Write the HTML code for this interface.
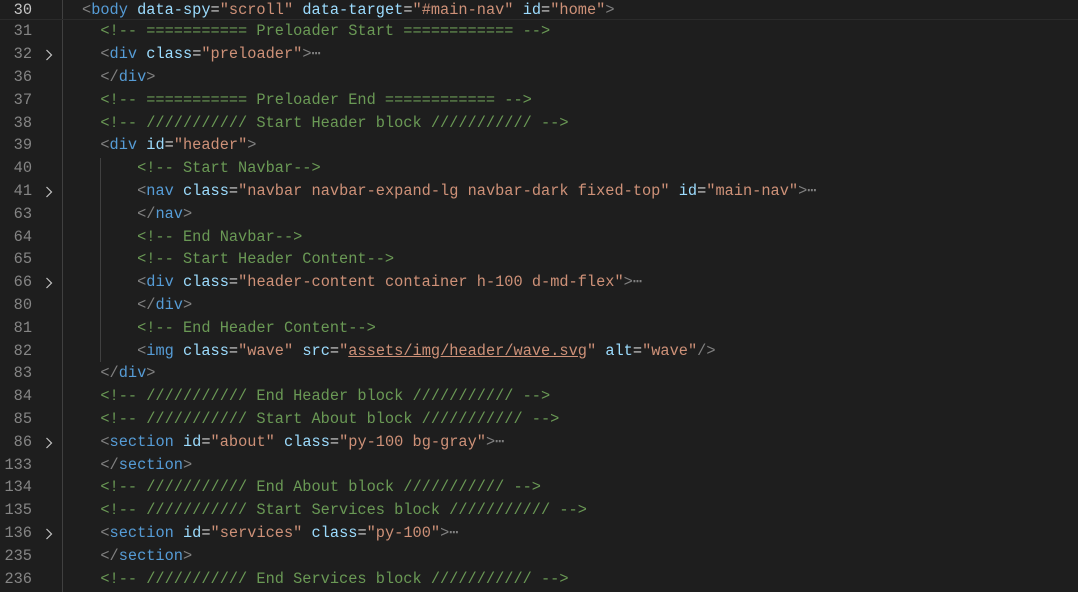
<!DOCTYPE html>
<html><head><style>
body{margin:0;width:1078px;height:592px;background:#1e1e1e;overflow:hidden;position:relative;font-family:"Liberation Mono",monospace;font-size:15.3px}
.l{position:absolute;left:0;width:1078px;height:22.8px;line-height:22.8px;white-space:pre}
.n{position:absolute;right:1046px;color:#858585;text-align:right}
.c{position:absolute;left:82px;color:#d4d4d4}
.f{position:absolute;left:45px;top:6px;width:8px;height:12px}
.cur{border-top:1px solid #2b2b2b;border-bottom:1px solid #2b2b2b;box-sizing:border-box}
.cur .n{color:#c6c6c6}
.t{color:#569cd6}.b{color:#808080}.a{color:#9cdcfe}.s{color:#ce9178}.m{color:#6a9955}.e{color:#808080}
.g{position:absolute;width:1px;background:#404040}
</style></head><body>
<div class="g" style="left:62px;top:0;height:592px"></div>
<div class="g" style="left:100px;top:158px;height:204px"></div>
<div class="l cur" style="top:-2.5px"><span class="n">30</span><span class="c"><span class="b">&lt;</span><span class="t">body</span> <span class="a">data-spy</span>=<span class="s">"scroll"</span> <span class="a">data-target</span>=<span class="s">"#main-nav"</span> <span class="a">id</span>=<span class="s">"home"</span><span class="b">&gt;</span></span></div>
<div class="l" style="top:20.3px"><span class="n">31</span><span class="c">  <span class="m">&lt;!-- =========== Preloader Start ============ --&gt;</span></span></div>
<div class="l" style="top:43.1px"><span class="n">32</span><svg class="f" viewBox="0 0 8 12"><polyline points="1.5,1 6.5,6 1.5,11" fill="none" stroke="#c5c5c5" stroke-width="1.2"/></svg><span class="c">  <span class="b">&lt;</span><span class="t">div</span> <span class="a">class</span>=<span class="s">"preloader"</span><span class="b">&gt;</span><span class="e">⋯</span></span></div>
<div class="l" style="top:65.9px"><span class="n">36</span><span class="c">  <span class="b">&lt;/</span><span class="t">div</span><span class="b">&gt;</span></span></div>
<div class="l" style="top:88.7px"><span class="n">37</span><span class="c">  <span class="m">&lt;!-- =========== Preloader End ============ --&gt;</span></span></div>
<div class="l" style="top:111.5px"><span class="n">38</span><span class="c">  <span class="m">&lt;!-- /////////// Start Header block /////////// --&gt;</span></span></div>
<div class="l" style="top:134.3px"><span class="n">39</span><span class="c">  <span class="b">&lt;</span><span class="t">div</span> <span class="a">id</span>=<span class="s">"header"</span><span class="b">&gt;</span></span></div>
<div class="l" style="top:157.1px"><span class="n">40</span><span class="c">      <span class="m">&lt;!-- Start Navbar--&gt;</span></span></div>
<div class="l" style="top:179.9px"><span class="n">41</span><svg class="f" viewBox="0 0 8 12"><polyline points="1.5,1 6.5,6 1.5,11" fill="none" stroke="#c5c5c5" stroke-width="1.2"/></svg><span class="c">      <span class="b">&lt;</span><span class="t">nav</span> <span class="a">class</span>=<span class="s">"navbar navbar-expand-lg navbar-dark fixed-top"</span> <span class="a">id</span>=<span class="s">"main-nav"</span><span class="b">&gt;</span><span class="e">⋯</span></span></div>
<div class="l" style="top:202.7px"><span class="n">63</span><span class="c">      <span class="b">&lt;/</span><span class="t">nav</span><span class="b">&gt;</span></span></div>
<div class="l" style="top:225.5px"><span class="n">64</span><span class="c">      <span class="m">&lt;!-- End Navbar--&gt;</span></span></div>
<div class="l" style="top:248.3px"><span class="n">65</span><span class="c">      <span class="m">&lt;!-- Start Header Content--&gt;</span></span></div>
<div class="l" style="top:271.1px"><span class="n">66</span><svg class="f" viewBox="0 0 8 12"><polyline points="1.5,1 6.5,6 1.5,11" fill="none" stroke="#c5c5c5" stroke-width="1.2"/></svg><span class="c">      <span class="b">&lt;</span><span class="t">div</span> <span class="a">class</span>=<span class="s">"header-content container h-100 d-md-flex"</span><span class="b">&gt;</span><span class="e">⋯</span></span></div>
<div class="l" style="top:293.9px"><span class="n">80</span><span class="c">      <span class="b">&lt;/</span><span class="t">div</span><span class="b">&gt;</span></span></div>
<div class="l" style="top:316.7px"><span class="n">81</span><span class="c">      <span class="m">&lt;!-- End Header Content--&gt;</span></span></div>
<div class="l" style="top:339.5px"><span class="n">82</span><span class="c">      <span class="b">&lt;</span><span class="t">img</span> <span class="a">class</span>=<span class="s">"wave"</span> <span class="a">src</span>=<span class="s">"<u>assets/img/header/wave.svg</u>"</span> <span class="a">alt</span>=<span class="s">"wave"</span><span class="b">/&gt;</span></span></div>
<div class="l" style="top:362.3px"><span class="n">83</span><span class="c">  <span class="b">&lt;/</span><span class="t">div</span><span class="b">&gt;</span></span></div>
<div class="l" style="top:385.1px"><span class="n">84</span><span class="c">  <span class="m">&lt;!-- /////////// End Header block /////////// --&gt;</span></span></div>
<div class="l" style="top:407.9px"><span class="n">85</span><span class="c">  <span class="m">&lt;!-- /////////// Start About block /////////// --&gt;</span></span></div>
<div class="l" style="top:430.7px"><span class="n">86</span><svg class="f" viewBox="0 0 8 12"><polyline points="1.5,1 6.5,6 1.5,11" fill="none" stroke="#c5c5c5" stroke-width="1.2"/></svg><span class="c">  <span class="b">&lt;</span><span class="t">section</span> <span class="a">id</span>=<span class="s">"about"</span> <span class="a">class</span>=<span class="s">"py-100 bg-gray"</span><span class="b">&gt;</span><span class="e">⋯</span></span></div>
<div class="l" style="top:453.5px"><span class="n">133</span><span class="c">  <span class="b">&lt;/</span><span class="t">section</span><span class="b">&gt;</span></span></div>
<div class="l" style="top:476.3px"><span class="n">134</span><span class="c">  <span class="m">&lt;!-- /////////// End About block /////////// --&gt;</span></span></div>
<div class="l" style="top:499.1px"><span class="n">135</span><span class="c">  <span class="m">&lt;!-- /////////// Start Services block /////////// --&gt;</span></span></div>
<div class="l" style="top:521.9px"><span class="n">136</span><svg class="f" viewBox="0 0 8 12"><polyline points="1.5,1 6.5,6 1.5,11" fill="none" stroke="#c5c5c5" stroke-width="1.2"/></svg><span class="c">  <span class="b">&lt;</span><span class="t">section</span> <span class="a">id</span>=<span class="s">"services"</span> <span class="a">class</span>=<span class="s">"py-100"</span><span class="b">&gt;</span><span class="e">⋯</span></span></div>
<div class="l" style="top:544.7px"><span class="n">235</span><span class="c">  <span class="b">&lt;/</span><span class="t">section</span><span class="b">&gt;</span></span></div>
<div class="l" style="top:567.5px"><span class="n">236</span><span class="c">  <span class="m">&lt;!-- /////////// End Services block /////////// --&gt;</span></span></div>
</body></html>
